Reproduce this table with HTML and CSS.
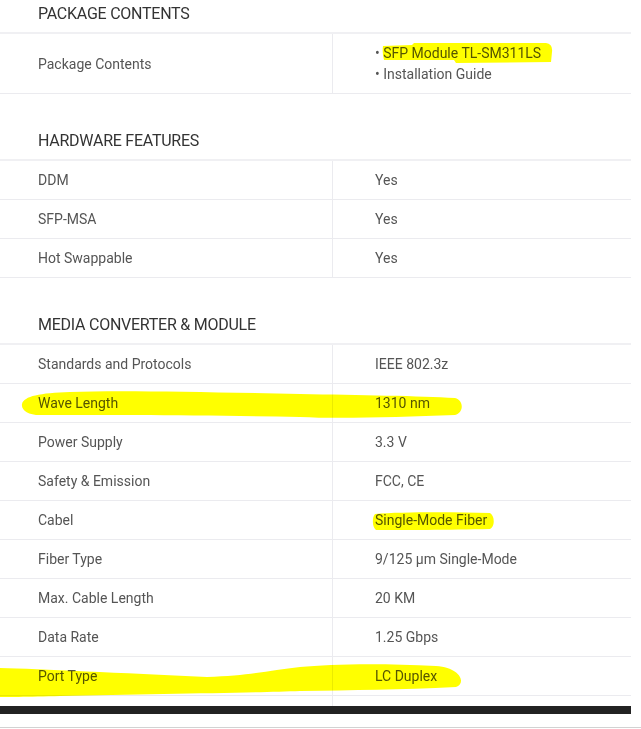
FILE: index.html
```html
<!DOCTYPE html>
<html>
<head>
<meta charset="utf-8">
<link rel="stylesheet" href="styles.css">
</head>
<body>
<div class="page">
  <section class="section first">
    <h2 class="heading">PACKAGE CONTENTS</h2>
    <div class="table">
      <div class="row tall">
        <div class="label">Package Contents</div>
        <div class="value">
          <ul class="list">
            <li>• SFP Module TL-SM311LS</li>
            <li>• Installation Guide</li>
          </ul>
        </div>
      </div>
    </div>
  </section>

  <section class="section">
    <h2 class="heading">HARDWARE FEATURES</h2>
    <div class="table">
      <div class="row"><div class="label">DDM</div><div class="value">Yes</div></div>
      <div class="row"><div class="label">SFP-MSA</div><div class="value">Yes</div></div>
      <div class="row"><div class="label">Hot Swappable</div><div class="value">Yes</div></div>
    </div>
  </section>

  <section class="section">
    <h2 class="heading">MEDIA CONVERTER &amp; MODULE</h2>
    <div class="table">
      <div class="row"><div class="label">Standards and Protocols</div><div class="value">IEEE 802.3z</div></div>
      <div class="row"><div class="label">Wave Length</div><div class="value">1310 nm</div></div>
      <div class="row"><div class="label">Power Supply</div><div class="value">3.3 V</div></div>
      <div class="row"><div class="label">Safety &amp; Emission</div><div class="value">FCC, CE</div></div>
      <div class="row"><div class="label">Cabel</div><div class="value">Single-Mode Fiber</div></div>
      <div class="row"><div class="label">Fiber Type</div><div class="value">9/125 µm Single-Mode</div></div>
      <div class="row"><div class="label">Max. Cable Length</div><div class="value">20 KM</div></div>
      <div class="row"><div class="label">Data Rate</div><div class="value">1.25 Gbps</div></div>
      <div class="row"><div class="label">Port Type</div><div class="value">LC Duplex</div></div>
      <div class="row spacer"><div class="label"></div><div class="value"></div></div>
    </div>
  </section>

  <div class="black-bar"></div>
  <div class="bottom-line"></div>

  <svg class="marks" width="641" height="729" viewBox="0 0 641 729" aria-hidden="true">
    <path fill="#ffff00" d="M383,46 L412,45 L414,43 L546,43 Q553,44 552,52 L551,62 L456,63 L454,60 L384,60 Q382,53 383,46 Z"/>
    <path fill="#ffff00" d="M22,404 C24,396 40,393 70,392 C120,390 200,392 300,394 C360,395 420,396 455,398 C464,400 464,413 455,415 C400,417 340,419 300,417 C200,415 100,415 40,415 C28,415 21,410 22,404 Z"/>
    <path fill="#ffff00" d="M375,514 C400,512 450,512 490,513 C495,516 495,527 490,529 C450,530 400,530 376,530 C372,527 372,517 375,514 Z"/>
    <path fill="#ffff00" d="M0,668 C40,669 120,673 207,677 C250,676 270,670 300,667 C330,664 380,663 436,666 C462,668 466,684 456,687 C400,690 353,690 300,691 C250,693 150,694 60,696 C30,697 0,697 0,697 Z"/>
  </svg>
</div>
</body>
</html>
```
FILE: styles.css
```css
html, body {
  margin: 0;
  padding: 0;
  background: #ffffff;
}

.page {
  position: relative;
  width: 641px;
  height: 729px;
  overflow: hidden;
  font-family: Roboto, "Liberation Sans", sans-serif;
}

.section {
  width: 631px;
}

.heading {
  margin: 0;
  padding: 39px 0 10px 38px;
  font-size: 16px;
  line-height: 16px;
  font-weight: 400;
  letter-spacing: -0.25px;
  color: #333333;
}

.first .heading {
  padding-top: 6px;
}

.table {
  border-top: 2px solid #f0f0f3;
}

.row {
  display: grid;
  grid-template-columns: 333px 1fr;
  height: 38px;
  border-bottom: 1px solid #ebebef;
  font-size: 14px;
  color: #555555;
}

.row.tall {
  height: 59px;
}

.row.spacer {
  height: 10px;
  border-bottom: none;
}

.label {
  display: flex;
  align-items: center;
  padding-left: 38px;
  border-right: 1px solid #ebebef;
}

.value {
  display: flex;
  align-items: center;
  padding-left: 42px;
}

.list {
  list-style: none;
  margin: 0;
  padding: 0;
  line-height: 21px;
}

.black-bar {
  width: 631px;
  height: 8px;
  background: #222222;
}

.bottom-line {
  margin-top: 13px;
  width: 641px;
  height: 1px;
  background: #d2d2d2;
}

.marks {
  position: absolute;
  left: 0;
  top: 0;
  pointer-events: none;
  mix-blend-mode: multiply;
}
```
